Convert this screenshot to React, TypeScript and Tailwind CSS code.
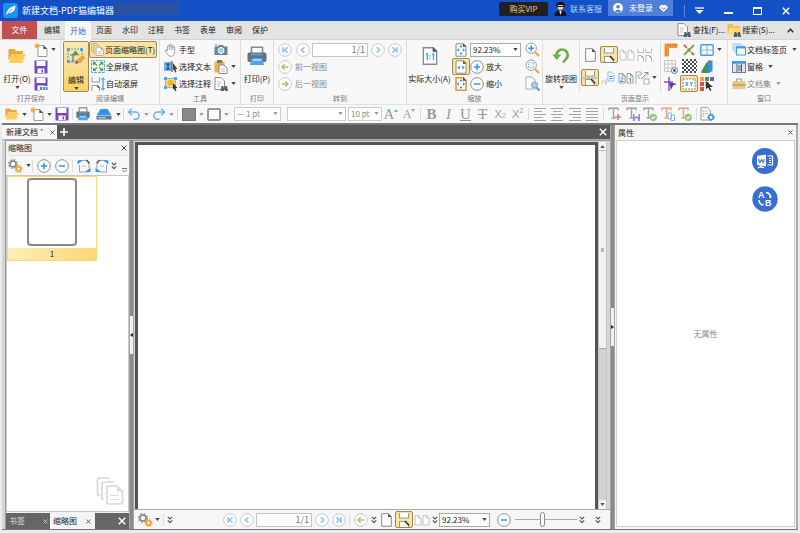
import React from 'react';

type IconProps = { w?: number; h?: number; box?: string; className?: string; children?: React.ReactNode };

const Svg = ({ w = 14, h = 14, box, className = '', children }: IconProps) => (
  <svg width={w} height={h} viewBox={box || `0 0 ${w} ${h}`} fill="none" aria-hidden="true" className={`shrink-0 ${className}`}>
    {children}
  </svg>
);

const Caret = ({ color = '#444' }: { color?: string }) => (
  <Svg w={5} h={3}>
    <path d="M0.3 0h4.4L2.5 3z" fill={color} />
  </Svg>
);

const DoubleChevron = () => (
  <Svg w={6} h={8}>
    <path d="M0.8 0.8L3 3l2.2-2.2M0.8 4.4L3 6.6l2.2-2.2" stroke="#555" strokeWidth="1.2" />
  </Svg>
);

const Cross = ({ size = 6, color = '#333', stroke = 1.2 }: { size?: number; color?: string; stroke?: number }) => (
  <Svg w={size} h={size} box="0 0 8 8">
    <path d="M0.8 0.8l6.4 6.4M7.2 0.8L0.8 7.2" stroke={color} strokeWidth={stroke} />
  </Svg>
);

/* ---------- icons ---------- */

const FolderIcon = ({ w = 14, h = 14 }) => (
  <Svg w={w} h={h} box="0 0 18 16">
    <path d="M0.5 1h6l1.5 2h7v3H4L0.5 13z" fill="#e9a83a" />
    <path d="M4 6h13.5L14.5 15H1z" fill="#ffcb5b" />
  </Svg>
);

const NewDocIcon = ({ w = 14, h = 14 }) => (
  <Svg w={w} h={h} box="0 0 14 14">
    <path d="M4 2.5h5.5l3.5 3.5v7.5H4z" fill="#fff" stroke="#999" />
    <path d="M9.3 2l4 4H9.3z" fill="#555" />
    <circle cx="3" cy="3" r="2" fill="#f5a93b" />
    <path d="M3 0v6M0 3h6M1 1l4 4M5 1L1 5" stroke="#f5a93b" strokeWidth="0.7" />
  </Svg>
);

const SaveIcon = ({ more = false }) => (
  <Svg w={14} h={14}>
    <path d="M0.5 0.5h13v13h-13z" fill="#7848c0" />
    <path d="M2.5 1h9v5h-9z" fill="#fff" />
    <path d="M3.5 8.5h7V13h-7z" fill="#fff" />
    <path d="M7.5 9.5h1.6v3H7.5z" fill="#7848c0" />
    {more && <path d="M5.5 9H14v5H5.5z" fill="#fff" />}
    {more && <path d="M6 11.5h8" stroke="#2c8de6" strokeWidth="2.8" strokeDasharray="2 0.8" />}
  </Svg>
);

const PrinterIcon = ({ w = 14, h = 14 }) => (
  <Svg w={w} h={h} box="0 0 20 20">
    <path d="M4.5 7V1.2h11V7" fill="#fff" stroke="#888" strokeWidth="1.6" />
    <rect x="0.5" y="6.5" width="19" height="9.5" rx="2" fill="#6a7078" />
    <path d="M4 8.5h12" stroke="#49a6f5" strokeWidth="1.8" />
    <path d="M4.5 12h11L17 19H3z" fill="#49a6f5" />
    <path d="M6 14h8" stroke="#d6ecff" strokeWidth="1.4" />
  </Svg>
);

const ScannerIcon = () => (
  <Svg w={16} h={12}>
    <path d="M4.5 1h7l4 6.5H0.5z" fill="#2f94ec" />
    <path d="M0.5 8h15v3.5H0.5z" fill="#68758a" />
    <path d="M2 9.8h8" stroke="#c6dcf4" />
  </Svg>
);

const UndoIcon = ({ flip = false }) => (
  <Svg w={14} h={12} className={flip ? '-scale-x-100' : ''}>
    <path d="M5 0.8L1.5 4 5 7.2M2 4h6.5a3.6 3.6 0 010 7.2H6.5" stroke="#6bb1ef" strokeWidth="1.5" />
  </Svg>
);

const PageIcon = ({ w = 11, h = 14, color = '#888' }) => (
  <Svg w={w} h={h} box="0 0 11 14">
    <path d="M0.7 0.7h6.6l3 3v9.6H0.7z" fill="#fff" stroke={color} />
    <path d="M7 0.5l3.6 3.6H7z" fill="#555" />
  </Svg>
);

const ScrollPagesIcon = ({ wide = false }) => (
  <Svg w={14} h={14}>
    <path d="M2.5 0v5h9V0M2.5 14V8.5h6l3 3V14" fill="#fff" stroke="#999" strokeWidth="1.1" />
    <path d="M8 8l4 4.5" stroke="#333" strokeWidth="1.5" />
    {wide && <path d="M0 7h14" stroke="#4ba2f2" strokeWidth="1.2" strokeDasharray="3 1" />}
  </Svg>
);

const TwoPagesIcon = ({ color = '#c4c4c4', label }: { color?: string; label?: boolean }) => (
  <Svg w={16} h={12}>
    <path d="M1 1.5h3.5L7 4v7H1zM9 1.5h3.5L15 4v7H9z" fill="#fff" stroke={color} />
    <path d="M4.5 1.5V4H7M12.5 1.5V4H15" stroke={color} />
    {label && <path d="M2.6 6h2.6L2.6 9.5h3M11 7l1.4-1v4" stroke="#2f94ec" />}
  </Svg>
);

const FourPagesIcon = ({ mixed = false }) => (
  <Svg w={16} h={14}>
    {mixed ? (
      <g>
        <path d="M1 13V1h5v3H3v3h2M9 8h5v5H9z" fill="#fff" stroke="#aaa" />
        <path d="M6 8l7-6.5h-3.5M13 1.5V4" stroke="#888" />
      </g>
    ) : (
      <g>
        <path d="M1 0.5v4h5.5v-4M9 0.5v4h5.5v-4M1 13.5V7.5h3l2.5 2.5v3.5M9 13.5V7.5h3l2.5 2.5v3.5" fill="#fff" stroke="#bbb" />
        <path d="M4 7.5L6.5 10M12 7.5l2.5 2.5" stroke="#777" />
      </g>
    )}
  </Svg>
);

const StairPagesIcon = () => (
  <Svg w={14} h={14}>
    <path d="M1 13.5V10h3v3.5M5.5 13.5v-5H7" stroke="#c8c8c8" />
    <path d="M7 1h3.5L13 3.5V10H7z" fill="#fff" stroke="#8dbdea" />
    <path d="M8.5 5.5h3M8.5 7.5h3" stroke="#2f94ec" />
  </Svg>
);

const FullScreenIcon = () => (
  <Svg w={14} h={13}>
    <rect x="0.6" y="0.6" width="12.8" height="11.8" fill="#f4fbef" stroke="#3f9df0" strokeDasharray="3 1" />
    <path d="M2 2h3.5L2 5.5zM12 2H8.5L12 5.5zM2 11h3.5L2 7.5zM12 11H8.5L12 7.5z" fill="#4aa329" />
    <path d="M3 3l3 2.5M11 3L8 5.5M3 10l3-2.5M11 10L8 7.5" stroke="#4aa329" strokeWidth="1.2" />
  </Svg>
);

const AutoScrollIcon = () => (
  <Svg w={14} h={14}>
    <path d="M1 0v5h7.5V0M1 14V8.5h5l2.5 2.5v3" fill="#fff" stroke="#999" />
    <path d="M6 8.5l2.5 2.5" stroke="#444" strokeWidth="1.3" />
    <path d="M12 2v10" stroke="#3f9df0" strokeWidth="1.3" />
    <path d="M10.3 3L12 0.8 13.7 3M10.3 11l1.7 2.2 1.7-2.2" stroke="#3f9df0" />
  </Svg>
);

const StackIcon = ({ w = 13, h = 13, color = '#999' }) => (
  <Svg w={w} h={h} box="0 0 28 28">
    <path d="M4 18H1.5V3q0-2 2-2h10M8 22H6V7q0-2 2-2h10" stroke={color} strokeWidth="1.6" />
    <path d="M11 10q0-1 1-1h9l5.5 5.5V26q0 1-1 1H12q-1 0-1-1z" fill="#fff" stroke={color} strokeWidth="1.6" />
    <path d="M21 8.5l6 6h-6z" fill={color} />
    <path d="M14.5 18.5h8M14.5 22.5h8" stroke={color} strokeWidth="1.2" />
  </Svg>
);

const EditContentIcon = () => (
  <Svg w={20} h={20}>
    <rect x="2" y="2" width="14" height="13" stroke="#4b9ee8" strokeDasharray="2 1" />
    <path d="M1 1h3v3H1zM14 1h3v3h-3zM1 13h3v3H1z" fill="#4ba2f2" />
    <path d="M6 7.5l3.5-4 4 5z" fill="#47a13c" />
    <path d="M4 8h6M7 8v6M5.5 14h3" stroke="#56779c" strokeWidth="1.2" />
    <path d="M10.5 13L17 8l2.5 3-6.5 5z" fill="#f3a33a" />
    <path d="M9 17l1.5-4 2.5 3z" fill="#8b6a4a" />
  </Svg>
);

const HandIcon = () => (
  <Svg w={13} h={14}>
    <path
      d="M3.5 8V3.2q.9-1.4 1.8 0V1.8q.9-1.5 1.8 0v1q1-1.3 1.8 0v1.4q1-1.2 1.8 0V10q-.7 3.4-3.6 3.4-2.6 0-4-2.8L1 7.6q1-1.2 2.5.4zM5.3 3v4M7.1 2.8V7M8.9 4v3"
      fill="#fff"
      stroke="#8a8a8a"
      strokeWidth="0.8"
    />
  </Svg>
);

const SelectTextIcon = () => (
  <Svg w={14} h={13}>
    <rect x="0" y="2" width="8" height="9" fill="#6db4f3" />
    <path d="M2 4h4M4 4v5M2 9h4" stroke="#123c6b" strokeWidth="1.1" />
    <path d="M8 1v11" stroke="#444" />
    <path d="M9 3l4.5 6h-2l1 3-1.5.5-1-3-1 1z" fill="#444" />
  </Svg>
);

const SelectNoteIcon = () => (
  <Svg w={14} h={14}>
    <rect x="1.5" y="1.5" width="10" height="9" fill="#ffd978" stroke="#4ba2f2" strokeDasharray="2 1" />
    <path d="M0 0h3v3H0zM10 0h3v3h-3zM0 9h3v3H0z" fill="#4ba2f2" />
    <circle cx="6.5" cy="6" r="3" fill="#f7b227" />
    <path d="M9 6l4.5 5h-2l1 2.5-1.5.5-1-2.5-1 1z" fill="#333" />
  </Svg>
);

const CameraIcon = () => (
  <Svg w={14} h={12}>
    <path d="M0.5 2.5H4L5 1h4l1 1.5h3.5V11H0.5z" fill="#6f8293" />
    <circle cx="7" cy="6.5" r="3" fill="#8fd0ff" stroke="#fff" />
    <path d="M1 1h2" stroke="#5f7488" />
  </Svg>
);

const PasteIcon = () => (
  <Svg w={14} h={14}>
    <path d="M0.5 1.5h10v11h-10z" fill="#f1b047" />
    <path d="M3 0h5v3H3z" fill="#777" />
    <path d="M5 5h5l3 3v5.5H5z" fill="#fff" stroke="#888" />
    <path d="M7 9h4M7 11h4" stroke="#bbb" />
  </Svg>
);

const FindDocIcon = () => (
  <Svg w={15} h={14}>
    <path d="M1 0.6h6l3.5 3.5v8.5H1z" fill="#fff" stroke="#8b8b8b" />
    <path d="M3 5h4M3 7h4M3 9h3" stroke="#c0c0c0" />
    <path d="M6.5 14l1-5h2v1.5h1.5V9h2l1 5h-3v-1.5H10V14z" fill="#4f6075" />
  </Svg>
);

const FindFolderIcon = () => (
  <Svg w={15} h={14}>
    <path d="M0.5 1h5l1 2H13v8H0.5z" fill="#f4c04c" />
    <path d="M2.5 5H14v7H1z" fill="#ffdb7c" />
    <path d="M6.5 14l1-5h2v1.5h1.5V9h2l1 5h-3v-1.5H10V14z" fill="#4f6075" />
  </Svg>
);

type RoundKind = 'first' | 'prev' | 'next' | 'last' | 'back' | 'forward' | 'plus' | 'minus';

const roundPaths: Record<RoundKind, string> = {
  first: 'M5 4.2v5.6M9.5 4.2L6.5 7l3 2.8',
  prev: 'M8.4 4.2L5.5 7l2.9 2.8',
  next: 'M5.8 4.2L8.7 7l-2.9 2.8',
  last: 'M9 4.2v5.6M4.5 4.2l3 2.8-3 2.8',
  back: 'M10.5 7H4M6.6 4.4L4 7l2.6 2.6',
  forward: 'M3.5 7H10M7.4 4.4L10 7 7.4 9.6',
  plus: 'M3.8 7h6.4M7 3.8v6.4',
  minus: 'M3.8 7h6.4',
};

const RoundIcon = ({ kind }: { kind: RoundKind }) => {
  const strong = kind === 'plus' || kind === 'minus';
  const green = kind === 'back' || kind === 'forward';
  return (
    <Svg w={14} h={14}>
      <circle cx="7" cy="7" r="6.3" fill="#fff" stroke={strong ? '#8b8b8b' : '#c8c8c8'} />
      <path d={roundPaths[kind]} stroke={strong ? '#2f94ec' : green ? '#9fcb78' : '#85bff2'} strokeWidth="1.5" />
    </Svg>
  );
};

const FitIcon = ({ kind }: { kind: 'page' | 'width' | 'visible' | 'actual' }) => (
  <Svg w={kind === 'actual' ? 16 : 12} h={kind === 'actual' ? 20 : 14} box="0 0 12 14">
    <path d="M1 0.8h7.5L11 3.3v9.9H1z" fill="#fff" stroke={kind === 'visible' ? '#e5972a' : '#8b8b8b'} strokeWidth={kind === 'visible' ? 1.6 : 1} />
    <path d="M8 0.5l3.3 3.3H8z" fill="#444" />
    {kind === 'width' && <path d="M4.8 5.5v4L2.3 7.5zM7.2 5.5v4l2.5-2z" fill="#2f94ec" />}
    {kind === 'actual' && <path d="M3 6.2l1-.8v4.8M7.6 6.2l1-.8v4.8M6 6.4v.9M6 8.6v.9" stroke="#54a8f0" strokeWidth="1.1" />}
    {(kind === 'page' || kind === 'visible') && (
      <path d="M6 2l1.8 2.3H4.2zM6 12l1.8-2.3H4.2zM1.8 7l2.3-1.8v3.6zM10.2 7L7.9 5.2v3.6z" fill="#2f94ec" />
    )}
  </Svg>
);

const LensIcon = ({ kind }: { kind: 'in' | 'area' | 'page' }) => (
  <Svg w={15} h={15}>
    {kind === 'page' && <path d="M1 1h6l3 3v9H1z" fill="#fff" stroke="#aaa" />}
    {kind === 'page' ? (
      <circle cx="9.5" cy="9" r="3" fill="#9ed1fa" stroke="#8f9aa5" />
    ) : (
      <circle cx="6.2" cy="6.2" r="5.2" fill="#fff" stroke="#9a9a9a" />
    )}
    {kind === 'in' && <path d="M3.2 6.2h6M6.2 3.2v6" stroke="#2f94ec" strokeWidth="1.5" />}
    {kind === 'area' && <rect x="3.7" y="3.7" width="5" height="5" stroke="#56a9f1" strokeDasharray="1.5 1" />}
    <path d={kind === 'page' ? 'M11.5 11.5l3 3' : 'M10 10l4 4'} stroke={kind === 'page' ? '#4ba2f2' : '#eea33a'} strokeWidth="2.2" />
  </Svg>
);

const RotateIcon = () => (
  <Svg w={18} h={20}>
    <path d="M4.5 9.5a5.6 5.6 0 119.4 3.7L11 16.5" stroke="#6cb045" strokeWidth="2.6" />
    <path d="M0.3 8.5h9L4.8 14z" fill="#6cb045" />
  </Svg>
);

const RulerIcon = () => (
  <Svg w={14} h={14}>
    <path d="M0.5 0.5h13v4.5H5v8.5H0.5z" fill="#ef9a35" />
    <path d="M4 1v2M6.5 1v2M9 1v2M11.5 1v2M1 6h2M1 8.5h2M1 11h2" stroke="#b86a1c" strokeWidth="0.8" />
  </Svg>
);

const GuideIcon = () => (
  <Svg w={14} h={14}>
    <path d="M2 2l10 10" stroke="#e2574c" strokeWidth="1.8" strokeDasharray="4 1.2" />
    <path d="M12 2L2 12" stroke="#67b044" strokeWidth="1.8" />
  </Svg>
);

const PaneGridIcon = () => (
  <Svg w={14} h={12}>
    <rect x="0.8" y="0.8" width="12.4" height="10.4" rx="1" fill="#fff" stroke="#3f9df0" strokeWidth="1.4" />
    <path d="M7 1v10M1 6h12" stroke="#8fa7bd" />
  </Svg>
);

const DotGridIcon = () => (
  <Svg w={14} h={14}>
    <path d="M0.5 0.5h11v11H0.5zM4 0v12M8 0v12M0 4h12M0 8h12" stroke="#bcbcbc" strokeWidth="0.8" />
    <circle cx="10.5" cy="10.5" r="3" fill="#fff" stroke="#5c7690" />
    <circle cx="10.5" cy="10.5" r="1.4" fill="#1d5d9e" />
  </Svg>
);

const CheckerIcon = () => (
  <Svg w={15} h={15}>
    {[0, 1, 2, 3, 4, 5, 6].map(row => (
      <path key={row} d={`M${row % 2 ? 2 : 0} ${row * 2 + 1}h15`} stroke="#4a4a4a" strokeWidth="2" strokeDasharray="2 2" />
    ))}
  </Svg>
);

const ContrastIcon = () => (
  <Svg w={12} h={14}>
    <path d="M0.5 11L6.5 1v12h-6z" fill="#3c9647" />
    <path d="M3 13L7 1h4.5v10L8 13z" fill="#3d8fdc" />
    <path d="M3 13L7 2v11z" fill="#3c9647" />
    <path d="M7 1h4.5" stroke="#777" />
  </Svg>
);

const SnapIcon = () => (
  <Svg w={14} h={14}>
    <path d="M5 0v14M0 5h9" stroke="#8257c6" strokeWidth="1.5" />
    <path d="M5 5l8 2-4 1.5L7 13z" fill="#5d3d9a" />
  </Svg>
);

const CoordIcon = () => (
  <Svg w={14} h={12}>
    <rect x="1" y="1" width="12" height="10" fill="#fff" stroke="#8b8b8b" strokeDasharray="2 1" />
    <path d="M3.5 4l2.5 4M6 4L3.5 8M8 4l1.3 2L10.6 4M9.3 6v2" stroke="#2f94ec" />
  </Svg>
);

const SwatchIcon = () => (
  <Svg w={14} h={14}>
    <path d="M0 0h4v4H0z" fill="#f4a236" />
    <path d="M5 0h4v4H5z" fill="#47a13c" />
    <path d="M10 0h4v4h-4z" fill="#7e55c7" />
    <path d="M0 5h4v4H0z" fill="#e04f45" />
    <path d="M5 5h4v4H5z" fill="#f0c12e" />
    <path d="M0 10h4v4H0z" fill="#e04f45" />
    <path d="M6 4l7 6H9.8l1.6 3.3-1.4.7-1.6-3.2L6 12z" fill="#333" />
  </Svg>
);

const TabsIcon = () => (
  <Svg w={14} h={13}>
    <path d="M1 8V1h9M3 10V3h9" stroke="#8ec2f1" />
    <rect x="4.5" y="4" width="9" height="8" fill="#fff" stroke="#3f9df0" />
    <path d="M4 4.5h10" stroke="#3f9df0" strokeWidth="2" />
  </Svg>
);

const PanesIcon = () => (
  <Svg w={14} h={12}>
    <rect x="0.5" y="0.5" width="13" height="11" fill="#dfe6ed" stroke="#6c7f93" />
    <path d="M0 1.5h14" stroke="#3f9df0" strokeWidth="2.5" />
    <path d="M5 3v8M9.5 3v8M6 5h3M6 7h3M6 9h3" stroke="#516579" />
  </Svg>
);

const BriefcaseIcon = () => (
  <Svg w={14} h={12}>
    <path d="M4.5 3V1h5v2" stroke="#999" />
    <rect x="0.5" y="3" width="13" height="8" rx="1" fill="#e9c98a" />
    <path d="M0.5 7h13" stroke="#bd9a5a" strokeWidth="1.4" />
  </Svg>
);

const GearsIcon = () => (
  <Svg w={15} h={14}>
    <circle cx="5" cy="5" r="3" stroke="#858585" strokeWidth="1.5" />
    <circle cx="5" cy="5" r="4.3" stroke="#858585" strokeWidth="1.3" strokeDasharray="1.6 1.8" />
    <circle cx="10.5" cy="10" r="2.2" stroke="#f0a02c" strokeWidth="1.6" />
    <circle cx="10.5" cy="10" r="3.4" stroke="#f0a02c" strokeWidth="1.2" strokeDasharray="1.4 1.3" />
  </Svg>
);

const TurnPageIcon = ({ flip = false }) => (
  <Svg w={14} h={14} className={flip ? '-scale-x-100' : ''}>
    <path d="M2.5 6v7H9M5 1.5h4.5L12 4v5" stroke="#a4a4a4" />
    <path d="M9.5 1l2.8 3.3" stroke="#444" strokeWidth="1.4" />
    <path d="M5 7.2h4" stroke="#aaa" strokeDasharray="1 0.5" />
    <path d="M1 5.5L0.5 1.5 4.5 1z" fill="#2f94ec" />
    <path d="M1 4Q2.5 1.5 5 1.8M13 10q-1.5 2.5-4 2.2" stroke="#2f94ec" strokeWidth="1.6" />
    <path d="M13.3 8.5l.2 4.5-4 .3z" fill="#2f94ec" />
  </Svg>
);

const AlignIcon = ({ kind }: { kind: 'left' | 'center' | 'right' | 'justify' }) => {
  const rows = {
    left: 'M0 0.5h12M0 3.5h8M0 6.5h12M0 9.5h8M0 12.5h12',
    center: 'M0 0.5h12M2 3.5h8M0 6.5h12M2 9.5h8M0 12.5h12',
    right: 'M0 0.5h12M4 3.5h8M0 6.5h12M4 9.5h8M0 12.5h12',
    justify: 'M0 0.5h12M0 3.5h12M0 6.5h12M0 9.5h12M0 12.5h12',
  };
  return (
    <Svg w={12} h={13}>
      <path d={rows[kind]} stroke="#a4a4a4" />
    </Svg>
  );
};

const badges = {
  add: <path d="M7 10h6M10 7v6" stroke="#dc7868" strokeWidth="1.6" />,
  save: (
    <g>
      <path d="M7 7h7v7H7z" fill="#a385d4" />
      <path d="M8.5 7h4v2.5h-4zM9 11.5h3V14H9z" fill="#fff" />
    </g>
  ),
  check: (
    <g>
      <circle cx="10.3" cy="10.3" r="3.6" fill="#91c67a" />
      <path d="M8.5 10.3l1.4 1.4 2.3-2.6" stroke="#fff" strokeWidth="1.1" />
    </g>
  ),
  copy: <path d="M7 6h3.5v6H7zM10 8h3.5v5.5H10z" fill="#fff" stroke="#7db9ee" />,
};

const TypeIcon = ({ badge, warm = false }: { badge: keyof typeof badges; warm?: boolean }) => (
  <Svg w={14} h={14}>
    <path d="M1 3.6V1.2h9v2.4M5.5 1.2V11M3.5 11h4" stroke={warm ? '#eda17c' : '#a0a0a0'} strokeWidth="1.4" />
    {badges[badge]}
  </Svg>
);

const DocSettingsIcon = () => (
  <Svg w={15} h={14}>
    <path d="M1 0.7h6.5L10.5 4v9H1z" fill="#fff" stroke="#999" />
    <path d="M2.5 4h2M2.5 6.5h2M2.5 9h2" stroke="#e37c55" />
    <path d="M5.5 4h2M5.5 6.5h3" stroke="#aaa" />
    <circle cx="11" cy="10.3" r="2.4" fill="#fff" stroke="#419be8" strokeWidth="1.8" />
    <path d="M11 6.5v7.6M7.2 10.3h7.6" stroke="#419be8" strokeDasharray="1.5 4.6" />
  </Svg>
);

/* ---------- building blocks ---------- */

const selectedBox = 'rounded-xs border border-[#a08a58] bg-[#fbe3a0]';

const Tool = ({ label, children, className = 'w-[18px]' }: { label: string; children: React.ReactNode; className?: string }) => (
  <button type="button" aria-label={label} className={`flex h-[17px] shrink-0 items-center justify-center ${className}`}>
    {children}
  </button>
);

const Drop = ({ label, className = 'w-[7px]', color = '#444' }: { label: string; className?: string; color?: string }) => (
  <Tool label={label} className={className}>
    <Caret color={color} />
  </Tool>
);

const LabelTool = ({ icon, text, className = 'gap-0.5', drop = false, muted = false }: { icon: React.ReactNode; text: string; className?: string; drop?: boolean; muted?: boolean }) => (
  <button type="button" className={`flex h-[17px] items-center whitespace-nowrap ${muted ? 'text-[#888]' : ''} ${className}`}>
    {icon}
    <span>{text}</span>
    {drop && <span className="ml-1"><Caret color={muted ? '#999' : '#444'} /></span>}
  </button>
);

const BigTool = ({ icon, text, drop = false, className = '' }: { icon: React.ReactNode; text: string; drop?: boolean; className?: string }) => (
  <button type="button" className={`flex h-[51px] shrink-0 flex-col items-center pt-[5px] whitespace-nowrap ${className}`}>
    <span className="flex h-5 items-center">{icon}</span>
    <span className="mt-2 leading-[10px]">{text}</span>
    {drop && <span className="mt-[2px]"><Caret /></span>}
  </button>
);

const Group = ({ label, className = '', children }: { label: string; className?: string; children: React.ReactNode }) => (
  <section aria-label={label} className={`flex shrink-0 flex-col border-r border-[#dedede] pt-px ${className}`}>
    <div className="flex h-[51px]">{children}</div>
    <div className="text-center text-[7px] leading-[12px] text-[#777]">{label}</div>
  </section>
);

const Sep = ({ className = '' }: { className?: string }) => <span className={`h-3 w-px shrink-0 bg-[#dcdcdc] ${className}`} />;

const Combo = ({ label, options, className = '', muted = false }: { label: string; options: string[]; className?: string; muted?: boolean }) => (
  <div className={`relative h-[14px] shrink-0 ${className}`}>
    <select
      aria-label={label}
      className={`h-full w-full appearance-none border bg-white pl-[2px] text-[8px] leading-[12px] ${muted ? 'border-[#ccc] text-[#888]' : 'border-[#aaa] text-[#222]'}`}
    >
      {options.map(option => <option key={option}>{option}</option>)}
    </select>
    <span className="pointer-events-none absolute top-[5px] right-[3px]">
      <Caret color={muted ? '#999' : '#444'} />
    </span>
  </div>
);

const PageField = ({ className = '' }: { className?: string }) => (
  <input
    aria-label="页码"
    defaultValue="1/1"
    className={`h-[14px] shrink-0 border border-[#c4c4c4] bg-white pr-[2px] text-right text-[9px] leading-[12px] text-[#777] ${className}`}
  />
);

/* ---------- window sections ---------- */

const TitleBar = () => (
  <header className="flex h-[21px] shrink-0 items-center bg-[#1350c6] text-white">
    <Svg w={15} h={15} className="ml-[3px]">
      <rect width="15" height="15" rx="3" fill="#1795f3" />
      <path d="M3 12.5Q3 5 12.5 2.5 12.5 10 5 10.6z" fill="#fff" />
      <path d="M3 13l6-7" stroke="#1795f3" strokeWidth="0.8" />
    </Svg>
    <h1 className="ml-1 text-[9px] whitespace-nowrap">新建文档-PDF猫编辑器</h1>
    <div className="mb-1 h-[13px] w-[65px] bg-[#2853a3]" />
    <div className="flex-1" />
    <button type="button" className="mb-1 h-[14px] w-[49px] rounded-xs bg-[#201f22] text-[8px] leading-[14px] text-[#ecc891]">购买VIP</button>
    <a href="#service" className="ml-1.5 flex items-center gap-[3px] pb-1 text-[8px] text-[#b9cff5]">
      <Svg w={13} h={15}>
        <path d="M2.5 6Q1.5 1 6.5 1t4.5 5z" fill="#111" />
        <path d="M3.8 4h5.4v3.5q-2.7 3.4-5.4 0z" fill="#f6c9a2" />
        <path d="M0.5 15q0-5 4-5.5l2 2 2-2q4 .5 4 5.5z" fill="#151515" />
        <path d="M5.3 10h2.4l-1.2 4z" fill="#fff" />
        <path d="M3.5 5.5h6" stroke="#222" />
      </Svg>
      联系客服
    </a>
    <button type="button" className="ml-1.5 flex h-[16px] w-[65px] items-center justify-center gap-1.5 self-start bg-[#5180d9] text-[8px]">
      <Svg w={10} h={10}>
        <circle cx="5" cy="5" r="5" fill="#fff" />
        <circle cx="5" cy="3.8" r="1.8" fill="#3c83e2" />
        <path d="M1.8 8.6q3.2-4 6.4 0Q5 10.6 1.8 8.6z" fill="#3c83e2" />
      </Svg>
      <span>未登录</span>
      <Svg w={9} h={7}>
        <path d="M2 0h5l2 2.5L4.5 7 0 2.5z" fill="#fff" />
        <path d="M2.5 2.5l2 2 2-2" stroke="#5180d9" />
      </Svg>
    </button>
    <span className="ml-[11px] h-3 w-px bg-[#5c88dc]" />
    <button type="button" aria-label="菜单" className="flex w-[29px] justify-center">
      <Svg w={9} h={7}>
        <path d="M0 1h9" stroke="#fff" strokeWidth="1.3" />
        <path d="M0.5 3h8L4.5 7z" fill="#fff" />
      </Svg>
    </button>
    <button type="button" aria-label="最小化" className="flex w-[29px] justify-center pt-1">
      <span className="h-[2px] w-[9px] bg-white" />
    </button>
    <button type="button" aria-label="最大化" className="flex w-[29px] justify-center">
      <span className="h-[8px] w-[9px] border border-t-2 border-white" />
    </button>
    <button type="button" aria-label="关闭" className="flex w-[28px] justify-center">
      <Cross size={8} color="#fff" stroke={1.5} />
    </button>
  </header>
);

const menus = ['编辑', '开始', '页面', '水印', '注释', '书签', '表单', '审阅', '保护'];

const MenuTabs = () => (
  <nav className="flex h-[19px] shrink-0 border-b border-[#d4d4d4] bg-[#e3e3e3] pl-[2px] whitespace-nowrap">
    <button type="button" className="w-[35px] bg-[#bf504f] text-white">文件</button>
    <div className="ml-[2px] flex">
      {menus.map(menu => (
        <button key={menu} type="button" className={`w-[26px] ${menu === '开始' ? 'h-[19px] bg-[#f8f8f8] text-[#2b6fc0]' : ''}`}>
          {menu}
        </button>
      ))}
    </div>
    <div className="flex-1" />
    <button type="button" className="flex items-center gap-px"><FindDocIcon />查找(F)...</button>
    <button type="button" className="ml-[2px] flex items-center"><FindFolderIcon />搜索(S)...</button>
    <button type="button" aria-label="收起" className="mr-[6px] ml-[12px] flex items-center">
      <Svg w={7} h={5}>
        <path d="M0.8 4.2l2.7-3 2.7 3" stroke="#333" strokeWidth="1.5" />
      </Svg>
    </button>
  </nav>
);

const Ribbon = () => (
  <div className="flex h-[65px] shrink-0 overflow-hidden border-b border-[#e2e2e2] bg-[#f8f8f8] pl-[2px]">
    <Group label="打开保存" className="w-[59px]">
      <BigTool icon={<FolderIcon w={18} h={16} />} text="打开(O)" drop className="w-[30px]" />
      <div>
        <div className="flex"><Tool label="新建"><NewDocIcon /></Tool><Drop label="新建选项" /></div>
        <Tool label="保存"><SaveIcon /></Tool>
        <Tool label="另存为"><SaveIcon more /></Tool>
      </div>
    </Group>
    <Group label="阅读编辑" className="w-[99px]">
      <BigTool icon={<EditContentIcon />} text="编辑" drop className={`ml-[2px] w-[26px] bg-linear-to-b from-[#fae8b4] to-[#fbd366] ${selectedBox}`} />
      <div>
        <LabelTool icon={<StackIcon />} text="页面缩略图(T)" className={`w-[68px] gap-px pl-px ${selectedBox}`} />
        <LabelTool icon={<FullScreenIcon />} text="全屏模式" className="gap-px pl-[2px]" />
        <LabelTool icon={<AutoScrollIcon />} text="自动滚屏" className="gap-px pl-[2px]" />
      </div>
    </Group>
    <Group label="工具" className="w-[81px]">
      <div className="ml-1 w-[48px]">
        <LabelTool icon={<HandIcon />} text="手型" />
        <LabelTool icon={<SelectTextIcon />} text="选择文本" className="gap-px" />
        <LabelTool icon={<SelectNoteIcon />} text="选择注释" className="gap-px" />
      </div>
      <div>
        <Tool label="快照"><CameraIcon /></Tool>
        <div className="flex"><Tool label="粘贴"><PasteIcon /></Tool><Drop label="粘贴选项" /></div>
        <div className="flex"><Tool label="查找"><FindDocIcon /></Tool><Drop label="查找选项" /></div>
      </div>
    </Group>
    <Group label="打印" className="w-[33px]">
      <BigTool icon={<PrinterIcon w={20} h={20} />} text="打印(P)" className="w-[32px]" />
    </Group>
    <Group label="转到" className="w-[133px]">
      <div className="ml-[2px]">
        <div className="flex items-center">
          <Tool label="首页"><RoundIcon kind="first" /></Tool>
          <Tool label="上一页" className="w-[17px]"><RoundIcon kind="prev" /></Tool>
          <PageField className="mx-px w-[56px]" />
          <Tool label="下一页" className="w-[17px]"><RoundIcon kind="next" /></Tool>
          <Tool label="末页"><RoundIcon kind="last" /></Tool>
        </div>
        <LabelTool icon={<RoundIcon kind="back" />} text="前一视图" muted className="gap-[3px] pl-[2px]" />
        <LabelTool icon={<RoundIcon kind="forward" />} text="后一视图" muted className="gap-[3px] pl-[2px]" />
      </div>
    </Group>
    <Group label="缩放" className="w-[136px]">
      <BigTool icon={<FitIcon kind="actual" />} text="实际大小(A)" className="w-[45px]" />
      <div className="w-[18px]">
        <Tool label="适合页面"><FitIcon kind="page" /></Tool>
        <Tool label="适合宽度" className={selectedBox + ' w-[18px]'}><FitIcon kind="width" /></Tool>
        <Tool label="适合可见"><FitIcon kind="visible" /></Tool>
      </div>
      <div className="w-[53px]">
        <div className="flex h-[17px] items-center"><Combo label="缩放比例" options={['92.23%']} className="w-[51px]" /></div>
        <LabelTool icon={<RoundIcon kind="plus" />} text="放大" className="gap-0.5" />
        <LabelTool icon={<RoundIcon kind="minus" />} text="缩小" className="gap-0.5" />
      </div>
      <div>
        <Tool label="放大工具"><LensIcon kind="in" /></Tool>
        <Tool label="区域缩放"><LensIcon kind="area" /></Tool>
        <Tool label="放大镜"><LensIcon kind="page" /></Tool>
      </div>
    </Group>
    <Group label="页面显示" className="w-[185px]">
      <BigTool icon={<RotateIcon />} text="旋转视图" drop className="w-[37px] border-r border-[#dedede]" />
      <div className="flex w-[81px] flex-col gap-[6px] border-r border-[#dedede] pt-[5px] pl-px">
        <div className="flex">
          <Tool label="单页" className="w-[19px]"><PageIcon /></Tool>
          <Tool label="连续" className={`w-[18px] ${selectedBox}`}><ScrollPagesIcon /></Tool>
          <Tool label="双页"><TwoPagesIcon /></Tool>
          <Tool label="双页连续" className="w-[17px]"><FourPagesIcon /></Tool>
        </div>
        <div className="flex">
          <Tool label="垂直排列" className={`w-[18px] ${selectedBox}`}><ScrollPagesIcon wide /></Tool>
          <Tool label="阶梯排列"><StairPagesIcon /></Tool>
          <Tool label="页序" className="w-[17px]"><TwoPagesIcon color="#999" label /></Tool>
          <Tool label="混合排列" className="w-[17px]"><FourPagesIcon mixed /></Tool>
          <Drop label="排列选项" />
        </div>
      </div>
      <div className="ml-px">
        <div className="flex"><Tool label="标尺"><RulerIcon /></Tool><Tool label="参考线"><GuideIcon /></Tool><Tool label="拆分"><PaneGridIcon /></Tool><Drop label="拆分选项" /></div>
        <div className="flex"><Tool label="网格"><DotGridIcon /></Tool><Tool label="透明网格"><CheckerIcon /></Tool><Tool label="对比"><ContrastIcon /></Tool></div>
        <div className="flex"><Tool label="对齐"><SnapIcon /></Tool><Tool label="坐标" className={`w-[18px] ${selectedBox}`}><CoordIcon /></Tool><Tool label="颜色"><SwatchIcon /></Tool></div>
      </div>
    </Group>
    <section aria-label="窗口" className="flex flex-1 flex-col pt-px">
      <div className="h-[51px] pl-1">
        <LabelTool icon={<TabsIcon />} text="文档标签页" drop className="gap-px" />
        <LabelTool icon={<PanesIcon />} text="窗格" drop className="gap-px" />
        <LabelTool icon={<BriefcaseIcon />} text="文档集" drop muted className="gap-px" />
      </div>
      <div className="text-center text-[7px] leading-[12px] text-[#777]">窗口</div>
    </section>
  </div>
);

const QuickBar = () => (
  <div className="flex h-[18px] shrink-0 items-center overflow-hidden bg-[#f8f8f8] pl-[3px] text-[#999]">
    <Tool label="打开"><FolderIcon /></Tool><Drop label="打开选项" />
    <Tool label="新建"><NewDocIcon /></Tool><Drop label="新建选项" />
    <Tool label="保存"><SaveIcon /></Tool>
    <Sep className="mx-px" />
    <Tool label="打印"><PrinterIcon /></Tool>
    <Tool label="扫描" className="w-[23px]"><ScannerIcon /></Tool><Drop label="扫描选项" />
    <Sep className="mx-px" />
    <Tool label="撤销"><UndoIcon /></Tool><Drop label="撤销选项" color="#999" />
    <Tool label="重做"><UndoIcon flip /></Tool><Drop label="重做选项" color="#999" />
    <Sep className="mx-[2px]" />
    <Tool label="填充色"><span className="h-[13px] w-[14px] border border-[#777] bg-[#888]" /></Tool><Drop label="填充选项" color="#999" />
    <Tool label="边框色"><span className="h-[13px] w-[14px] rounded-xs border-2 border-[#999] bg-white" /></Tool><Drop label="边框选项" color="#999" />
    <Combo label="线宽" options={['— 1 pt']} muted className="ml-1 w-[47px]" />
    <Combo label="字体" options={['']} muted className="ml-1.5 w-[59px]" />
    <Combo label="字号" options={['10 pt']} muted className="ml-[2px] w-[34px]" />
    <div className="flex font-['Liberation_Serif',serif] leading-none">
      <Tool label="增大字号" className="w-[18px] text-[15px]">
        A<Svg w={4} h={3} className="mb-2"><path d="M0 3h4L2 0z" fill="#6bb1ef" /></Svg>
      </Tool>
      <Tool label="减小字号" className="w-[18px] text-[12px]">
        A<Svg w={4} h={3} className="mb-2"><path d="M0 0h4L2 3z" fill="#6bb1ef" /></Svg>
      </Tool>
    </div>
    <Sep className="mx-[2px]" />
    <div className="flex font-['Liberation_Serif',serif] text-[15px] leading-none">
      <Tool label="粗体" className="w-[17px]"><b>B</b></Tool>
      <Tool label="斜体" className="w-[17px]"><i>I</i></Tool>
      <Tool label="下划线" className="w-[17px]"><u>U</u></Tool>
      <Tool label="删除线" className="w-[17px]"><s>T</s></Tool>
      <Tool label="下标" className="w-[18px] font-['Liberation_Sans',sans-serif] text-[11px]">X<sub className="text-[7px] text-[#6bb1ef]">2</sub></Tool>
      <Tool label="上标" className="w-[17px] font-['Liberation_Sans',sans-serif] text-[11px]">X<sup className="text-[7px] text-[#6bb1ef]">2</sup></Tool>
    </div>
    <Sep className="mx-[2px]" />
    <Tool label="左对齐" className="w-[17px]"><AlignIcon kind="left" /></Tool>
    <Tool label="居中"><AlignIcon kind="center" /></Tool>
    <Tool label="右对齐" className="w-[17px]"><AlignIcon kind="right" /></Tool>
    <Tool label="两端对齐"><AlignIcon kind="justify" /></Tool>
    <Sep className="mx-[2px]" />
    <Tool label="添加文本"><TypeIcon badge="add" /></Tool>
    <Tool label="保存样式" className="w-[17px]"><TypeIcon badge="save" /></Tool>
    <Tool label="应用样式"><TypeIcon badge="check" /></Tool>
    <Tool label="复制样式" className="w-[17px]"><TypeIcon badge="copy" warm /></Tool>
    <Tool label="确认样式"><TypeIcon badge="check" warm /></Tool>
    <Sep className="mx-[2px]" />
    <Tool label="文档设置" className="w-[17px]"><DocSettingsIcon /></Tool>
  </div>
);

const Splitter = ({ arrow, className }: { arrow: string; className: string }) => (
  <div className={`flex shrink-0 items-center border-x border-[#a4a4a4] bg-[#8b8b8b] ${className}`}>
    <button type="button" aria-label="折叠" className="flex h-[38px] w-full items-center justify-center bg-[#f0f0f0]">
      <Svg w={3} h={4}>
        <path d={arrow} fill="#222" />
      </Svg>
    </button>
  </div>
);

const ThumbnailPanel = () => (
  <aside className="flex w-[124px] shrink-0 flex-col border-t border-l border-[#999] bg-[#f3f3f3]">
    <div className="flex h-[14px] shrink-0 items-center justify-between pr-[2px] pl-[2px]">
      <h2>缩略图</h2>
      <button type="button" aria-label="关闭缩略图"><Cross /></button>
    </div>
    <div className="flex h-[20px] shrink-0 items-center border-t border-[#e3e3e3] bg-[#f8f8f8] pl-px">
      <Tool label="选项" className="w-[17px]"><GearsIcon /></Tool>
      <Drop label="更多选项" className="w-[8px]" />
      <Sep className="mr-[2px]" />
      <Tool label="放大缩略图"><RoundIcon kind="plus" /></Tool>
      <Tool label="缩小缩略图" className="w-[17px]"><RoundIcon kind="minus" /></Tool>
      <Sep className="mx-[2px]" />
      <Tool label="左旋"><TurnPageIcon /></Tool>
      <Tool label="右旋" className="w-[17px]"><TurnPageIcon flip /></Tool>
      <Tool label="更多" className="w-[8px]"><DoubleChevron /></Tool>
      <span className="ml-1 self-end pb-[2px]">
        <Svg w={5} h={5}><path d="M0 0.5h5M0.5 2l2 2 2-2" stroke="#777" /></Svg>
      </span>
    </div>
    <div className="flex flex-1 flex-col justify-between border border-[#c8c8c8] bg-white">
      <figure className="flex h-[85px] w-[90px] flex-col items-center justify-between border border-[#fdd66f] pt-px">
        <div className="h-[68px] w-[50px] rounded-sm border-2 border-[#888] bg-white" />
        <figcaption className="h-[12px] w-full bg-linear-to-r from-[#feeeb8] to-[#fdd873] text-center leading-[12px]">1</figcaption>
      </figure>
      <div className="flex justify-end pr-1 pb-1.5">
        <StackIcon w={28} h={28} color="#d8d8d8" />
      </div>
    </div>
    <div className="mt-px flex h-[16px] shrink-0 items-center bg-[#666]">
      <button type="button" className="flex h-full w-[44px] items-center justify-between pr-[2px] pl-[3px] text-[#ddd]">
        书签<Cross size={5} color="#ddd" />
      </button>
      <button type="button" className="flex h-full w-[45px] items-center justify-between bg-[#f5f5f5] pr-[4px] pl-[3px]">
        缩略图<Cross size={5} />
      </button>
      <button type="button" aria-label="关闭窗格" className="mr-[3px] ml-auto"><Cross size={8} color="#fff" stroke={1.4} /></button>
    </div>
  </aside>
);

const StatusBar = () => (
  <div className="flex h-[20px] shrink-0 items-center border-t border-[#a8a8a8] bg-[#f6f6f6] pl-[2px]">
    <Tool label="选项"><GearsIcon /></Tool>
    <Drop label="更多选项" />
    <Sep className="mx-[2px]" />
    <Tool label="展开" className="w-[8px]"><DoubleChevron /></Tool>
    <div className="flex-1" />
    <Tool label="首页" className="w-[17px]"><RoundIcon kind="first" /></Tool>
    <Tool label="上一页" className="w-[17px]"><RoundIcon kind="prev" /></Tool>
    <PageField className="mx-px w-[56px]" />
    <Tool label="下一页" className="w-[17px]"><RoundIcon kind="next" /></Tool>
    <Tool label="末页" className="w-[17px]"><RoundIcon kind="last" /></Tool>
    <Sep className="mx-[2px]" />
    <Tool label="后退"><RoundIcon kind="back" /></Tool>
    <Tool label="更多导航" className="w-[8px]"><DoubleChevron /></Tool>
    <Tool label="单页" className="w-[17px]"><PageIcon /></Tool>
    <Tool label="连续" className={`w-[18px] ${selectedBox}`}><ScrollPagesIcon /></Tool>
    <Tool label="双页"><TwoPagesIcon /></Tool>
    <Tool label="更多布局" className="w-[8px]"><DoubleChevron /></Tool>
    <Combo label="页面缩放" options={['92.23%']} className="w-[51px]" />
    <Tool label="缩小" className="ml-1 w-[20px]"><RoundIcon kind="minus" /></Tool>
    <input
      type="range"
      aria-label="缩放滑块"
      defaultValue={43}
      className="ml-px h-[16px] w-[62px] appearance-none bg-[linear-gradient(#aaa,#aaa)] bg-[length:100%_1px] bg-center bg-no-repeat [&::-webkit-slider-thumb]:h-[15px] [&::-webkit-slider-thumb]:w-[5px] [&::-webkit-slider-thumb]:appearance-none [&::-webkit-slider-thumb]:rounded-sm [&::-webkit-slider-thumb]:border [&::-webkit-slider-thumb]:border-[#888] [&::-webkit-slider-thumb]:bg-white"
    />
    <Tool label="更多缩放" className="w-[10px]"><DoubleChevron /></Tool>
    <Tool label="更多工具" className="mr-[7px] ml-[6px] w-[10px]"><DoubleChevron /></Tool>
  </div>
);

const DocumentView = () => (
  <main className="flex min-w-0 flex-1 flex-col border-t border-[#999] bg-[#d6d6d6] pt-px">
    <div className="flex min-h-0 flex-1 pl-px">
      <div className="flex-1 border-t-[3px] border-r-[3px] border-l-[3px] border-[#555] bg-white" />
      <div className="mr-[3px] flex w-[9px] shrink-0 flex-col border-x border-[#c4c4c4] bg-[#d2d2d2]">
        <button type="button" aria-label="向上滚动" className="flex h-[9px] items-center justify-center border-b border-[#bbb] bg-[#f5f5f5]">
          <Svg w={5} h={3}><path d="M0.3 3h4.4L2.5 0z" fill="#555" /></Svg>
        </button>
        <div className="flex h-[54%] items-center justify-center border-b border-[#aaa] bg-[#f1f1f1]">
          <span className="h-[4px] w-[3px] bg-[#b5b5b5]" />
        </div>
        <button type="button" aria-label="向下滚动" className="mt-auto flex h-[9px] items-center justify-center bg-[#f5f5f5]">
          <Caret color="#555" />
        </button>
      </div>
    </div>
    <StatusBar />
  </main>
);

const PropertyPanel = () => (
  <aside className="flex flex-1 flex-col border-r-2 border-[#aaa] bg-[#f4f4f4]">
    <div className="flex h-[15px] shrink-0 items-center justify-between pr-[3px] pl-[3px]">
      <h2>属性</h2>
      <button type="button" aria-label="关闭属性"><Cross size={5} /></button>
    </div>
    <div className="mx-px mb-[2px] flex flex-1 flex-col border border-[#cfcfcf] bg-white">
      <div className="flex flex-col items-end gap-3 pt-[7px] pr-4">
        <button type="button" aria-label="转换Word">
          <Svg w={26} h={26}>
            <circle cx="13" cy="13" r="13" fill="#3a6fd0" />
            <path d="M5 8l9-1.5v12L5 17z" fill="#fff" />
            <path d="M6.5 11l1.3 3.5 1.7-3 1.7 3 1.3-3.5" stroke="#3a6fd0" strokeWidth="1.1" />
            <path d="M15.5 8h5v9h-5M17 10.5h2M17 12.5h2M17 14.5h2" stroke="#fff" strokeWidth="1.2" />
            <path d="M6 20l3-2v1.3h3" stroke="#fff" strokeWidth="1.2" />
          </Svg>
        </button>
        <button type="button" aria-label="翻译">
          <Svg w={26} h={26}>
            <circle cx="13" cy="13" r="12.7" fill="#3a6fd0" />
            <text x="6" y="12" fontFamily="Liberation Sans" fontWeight="bold" fontSize="9" fill="#fff">A</text>
            <text x="13" y="20" fontFamily="Liberation Sans" fontWeight="bold" fontSize="9" fill="#fff">B</text>
            <path d="M14 6.5q4.5.5 4.5 5M7 14q0 4.5 4.5 5" stroke="#fff" strokeWidth="1.6" />
            <path d="M17 10.5l1.5 2 1.5-2z" fill="#fff" />
          </Svg>
        </button>
      </div>
      <div className="flex flex-1 justify-center pt-[116px] text-[#888]">无属性</div>
    </div>
  </aside>
);

const App: React.FC = () => (
  <div className="flex h-screen flex-col overflow-hidden bg-[#ececec] font-['Noto_Sans_CJK_SC','Noto_Sans',sans-serif] text-[8px] leading-[12px] text-[#222]">
    <TitleBar />
    <MenuTabs />
    <Ribbon />
    <QuickBar />
    <div className="mr-[2px] mb-[3px] ml-[2px] flex min-h-0 flex-1 border-t-2 border-b border-[#777]">
      <div className="flex min-w-0 flex-1 flex-col">
        <div className="flex h-[14px] shrink-0 items-center bg-[#585858]">
          <button type="button" className="flex h-full w-[55px] items-center justify-between bg-[#f6f6f6] pr-[2px] pl-1">
            <span>新建文档 <span className="text-[#2f7ad0]">*</span></span>
            <Cross size={5} />
          </button>
          <button type="button" aria-label="新建标签" className="ml-[3px]">
            <Svg w={8} h={8}><path d="M0 4h8M4 0v8" stroke="#fff" strokeWidth="1.6" /></Svg>
          </button>
          <button type="button" aria-label="关闭文档" className="mr-[3px] ml-auto"><Cross size={8} color="#fff" stroke={1.4} /></button>
        </div>
        <div className="flex min-h-0 flex-1 border-t border-[#b0b0b0] bg-[#d6d6d6] pl-[3px]">
          <ThumbnailPanel />
          <Splitter arrow="M3 0v4L0 2z" className="w-[5px]" />
          <DocumentView />
        </div>
      </div>
      <div className="flex w-[188px] shrink-0">
        <Splitter arrow="M0 0v4l3-2z" className="w-[5px]" />
        <PropertyPanel />
      </div>
    </div>
  </div>
);

export default App;
